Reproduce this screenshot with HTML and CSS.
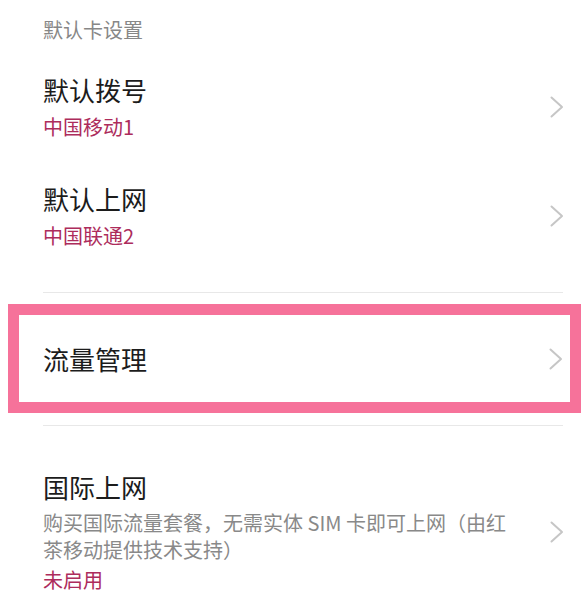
FILE: index.html
```html
<!DOCTYPE html>
<html lang="zh-CN">
<head>
<meta charset="utf-8">
<title>默认卡设置</title>
<link rel="stylesheet" href="styles.css">
</head>
<body>
<div class="page">
  <div class="section-header">默认卡设置</div>

  <div class="row">
    <div class="row-text">
      <div class="title">默认拨号</div>
      <div class="value">中国移动1</div>
    </div>
    <svg class="chev" viewBox="0 0 14 22" width="14" height="22"><path d="M1.5 1.5 L12 11 L1.5 20.5" /></svg>
  </div>

  <div class="row">
    <div class="row-text">
      <div class="title">默认上网</div>
      <div class="value">中国联通2</div>
    </div>
    <svg class="chev" viewBox="0 0 14 22" width="14" height="22"><path d="M1.5 1.5 L12 11 L1.5 20.5" /></svg>
  </div>

  <div class="divider divider-first"></div>

  <div class="highlight">
    <div class="row row-single">
      <div class="row-text">
        <div class="title">流量管理</div>
      </div>
      <svg class="chev" viewBox="0 0 14 22" width="14" height="22"><path d="M1.5 1.5 L12 11 L1.5 20.5" /></svg>
    </div>
  </div>

  <div class="divider divider-second"></div>

  <div class="row row-intl">
    <div class="row-text">
      <div class="title">国际上网</div>
      <div class="desc">购买国际流量套餐，无需实体 SIM 卡即可上网（由红茶移动提供技术支持）</div>
      <div class="value value-status">未启用</div>
    </div>
    <svg class="chev" viewBox="0 0 14 22" width="14" height="22"><path d="M1.5 1.5 L12 11 L1.5 20.5" /></svg>
  </div>
</div>
</body>
</html>
```

FILE: styles.css
```css
html, body {
  margin: 0;
  padding: 0;
  background: #ffffff;
}

body {
  font-family: "Noto Sans CJK SC", "Noto Sans", sans-serif;
  overflow: hidden;
}

.page {
  width: 584px;
  height: 591px;
  overflow: hidden;
}

.section-header {
  padding: 16px 0 9px 43px;
  font-size: 20px;
  line-height: 27px;
  color: #878787;
}

.row {
  display: flex;
  align-items: center;
  padding: 20px 20px 20px 43px;
  height: 69px;
}

.row-text {
  flex: 1;
  min-width: 0;
  display: flex;
  flex-direction: column;
}

.title {
  font-size: 26px;
  line-height: 36px;
  color: #1c1c1c;
}

.value {
  margin-top: 5px;
  font-size: 20px;
  line-height: 28px;
  color: #ad2c5c;
}

.chev {
  flex: none;
  width: 14px;
  height: 22px;
  margin-left: 16px;
}

.chev path {
  fill: none;
  stroke: #c6c6c6;
  stroke-width: 2;
  stroke-linecap: round;
  stroke-linejoin: round;
}

.divider {
  height: 1px;
  background: #e8e8e8;
  margin-left: 43px;
  margin-right: 21px;
}

.divider-first {
  margin-top: 22px;
}

.highlight {
  margin: 11px 3px 0 8px;
  border: 11px solid #f6729a;
  height: 87px;
  display: flex;
  align-items: center;
}

.highlight .row {
  flex: 1;
  height: auto;
  padding: 0 7px 0 24px;
}

.divider-second {
  margin-top: 12px;
}

.row-intl {
  height: auto;
  margin-top: 23px;
}

.desc {
  margin-top: 4px;
  width: 478px;
  font-size: 20px;
  line-height: 27px;
  color: #898989;
}

.value-status {
  margin-top: 3px;
}
```
